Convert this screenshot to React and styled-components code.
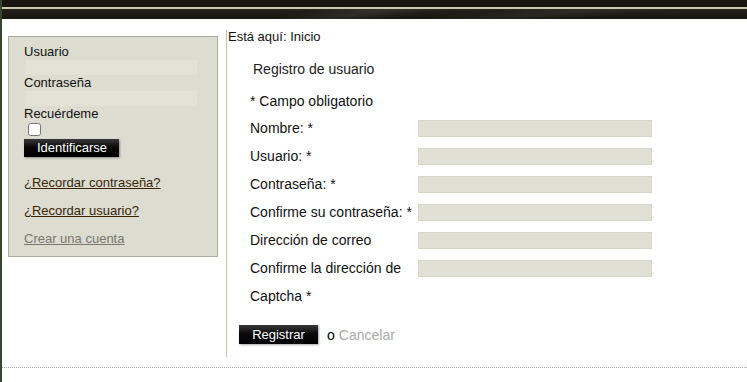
import React from "react"
import styled, { createGlobalStyle } from "styled-components"

const GlobalStyle = createGlobalStyle`
  html, body { margin: 0; padding: 0; background: #fff; }
  body { font-family: Arial, "Liberation Sans", sans-serif; color: #111; }
`

const fields = [
  { label: "Nombre: *", input: true },
  { label: "Usuario: *", input: true },
  { label: "Contraseña: *", input: true },
  { label: "Confirme su contraseña: *", input: true },
  { label: "Dirección de correo", input: true },
  { label: "Confirme la dirección de", input: true },
  { label: "Captcha *", input: false },
]

const App = () => {
  return (
    <>
      <GlobalStyle />
      <Page>
        <Header>
          <TopBar />
          <Stripe />
          <Banner />
        </Header>
        <Main>
          <Sidebar>
            <LoginBox>
              <SideLabel>Usuario</SideLabel>
              <SideInput />
              <SideLabel>Contraseña</SideLabel>
              <SideInput />
              <SideLabel>Recuérdeme</SideLabel>
              <Check type="checkbox" />
              <DarkButton $small>Identificarse</DarkButton>
              <Links>
                <SideLink>¿Recordar contraseña?</SideLink>
                <SideLink>¿Recordar usuario?</SideLink>
                <SideLink $muted>Crear una cuenta</SideLink>
              </Links>
            </LoginBox>
          </Sidebar>
          <Content>
            <Breadcrumb>Está aquí: Inicio</Breadcrumb>
            <Title>Registro de usuario</Title>
            <Form>
              <Note>* Campo obligatorio</Note>
              {fields.map(f => (
                <FieldRow key={f.label}>
                  <FieldLabel>{f.label}</FieldLabel>
                  {f.input && <FieldInput />}
                </FieldRow>
              ))}
            </Form>
            <Actions>
              <DarkButton>Registrar</DarkButton>
              <Or>o</Or>
              <Cancel>Cancelar</Cancel>
            </Actions>
          </Content>
        </Main>
        <Footer />
      </Page>
    </>
  )
}

const Page = styled.div`
  width: 747px;
  height: 382px;
  overflow: hidden;
  border-left: 2px solid #3a4530;
  box-sizing: border-box;
  position: relative;
`

const Header = styled.div`
  margin-left: -2px;
  display: flex;
  flex-direction: column;
`

const TopBar = styled.div`
  height: 7px;
  background: #16160f;
`

const Stripe = styled.div`
  height: 2px;
  background: #c8c8b0;
`

const Banner = styled.div`
  height: 10px;
  background:
    linear-gradient(170deg, transparent 40%, rgba(255,255,255,0.08) 48%, transparent 56%),
    linear-gradient(175deg, transparent 60%, rgba(255,255,255,0.06) 70%, transparent 80%),
    linear-gradient(180deg, #23231b, #16160f);
`

const Main = styled.div`
  display: flex;
  align-items: flex-start;
  padding-top: 11px;
`

const Sidebar = styled.div`
  width: 224px;
  padding: 6px 0 0 6px;
  box-sizing: border-box;
`

const LoginBox = styled.div`
  width: 210px;
  height: 221px;
  box-sizing: border-box;
  background: #dcdcd0;
  border: 1px solid #aeae9e;
  padding: 7px 0 0 15px;
  display: flex;
  flex-direction: column;
  align-items: flex-start;
`

const SideLabel = styled.div`
  font-size: 13px;
  line-height: 16px;
`

const SideInput = styled.div`
  width: 172px;
  height: 15px;
  margin: 0 0 0 1px;
  background: #e2e2d6;
`

const Check = styled.input`
  width: 13px;
  height: 13px;
  margin: 1px 0 3px 4px;
`

const DarkButton = styled.button`
  font-family: Arial, "Liberation Sans", sans-serif;
  font-size: 13px;
  color: #fff;
  border: none;
  background: linear-gradient(180deg, #3a3a3a 0%, #0a0a0a 45%, #000 100%);
  box-shadow: 1px 1px 2px rgba(0,0,0,0.35);
  height: ${p => (p.$small ? "18px" : "19px")};
  line-height: 18px;
  padding: 0 13px;
  width: ${p => (p.$small ? "95px" : "79px")};
  margin: 0;
  cursor: pointer;
`

const Links = styled.div`
  display: flex;
  flex-direction: column;
  gap: 12px;
  margin-top: 18px;
`

const SideLink = styled.a`
  font-size: 13px;
  line-height: 16px;
  color: ${p => (p.$muted ? "#777770" : "#3a2408")};
  text-decoration: underline;
  cursor: pointer;
`

const Content = styled.div`
  border-left: 1px solid #c4c4b4;
  height: 327px;
  padding-left: 1px;
  display: flex;
  flex-direction: column;
  align-items: flex-start;
`

const Breadcrumb = styled.div`
  font-size: 13px;
  line-height: 14px;
`

const Title = styled.div`
  font-size: 14px;
  line-height: 16px;
  color: #222;
  margin: 17px 0 0 25px;
`

const Form = styled.div`
  margin: 16px 0 0 22px;
  display: flex;
  flex-direction: column;
`

const Note = styled.div`
  font-size: 14px;
  line-height: 16px;
  margin-bottom: 5px;
`

const FieldRow = styled.div`
  display: flex;
  align-items: center;
  height: 28px;
`

const FieldLabel = styled.div`
  width: 168px;
  font-size: 14px;
  white-space: nowrap;
  overflow: hidden;
`

const FieldInput = styled.div`
  width: 234px;
  height: 17px;
  box-sizing: border-box;
  background: #e0e0d4;
  border: 1px solid #d6d6ca;
`

const Actions = styled.div`
  display: flex;
  align-items: center;
  margin: 15px 0 0 11px;
  font-size: 14px;
`

const Or = styled.span`
  margin-left: 9px;
  color: #000;
`

const Cancel = styled.a`
  margin-left: 4px;
  color: #aaaaaa;
`

const Footer = styled.div`
  position: absolute;
  left: -2px;
  right: 0;
  top: 367px;
  border-top: 1px dotted #a8a8a8;
`

export default App
